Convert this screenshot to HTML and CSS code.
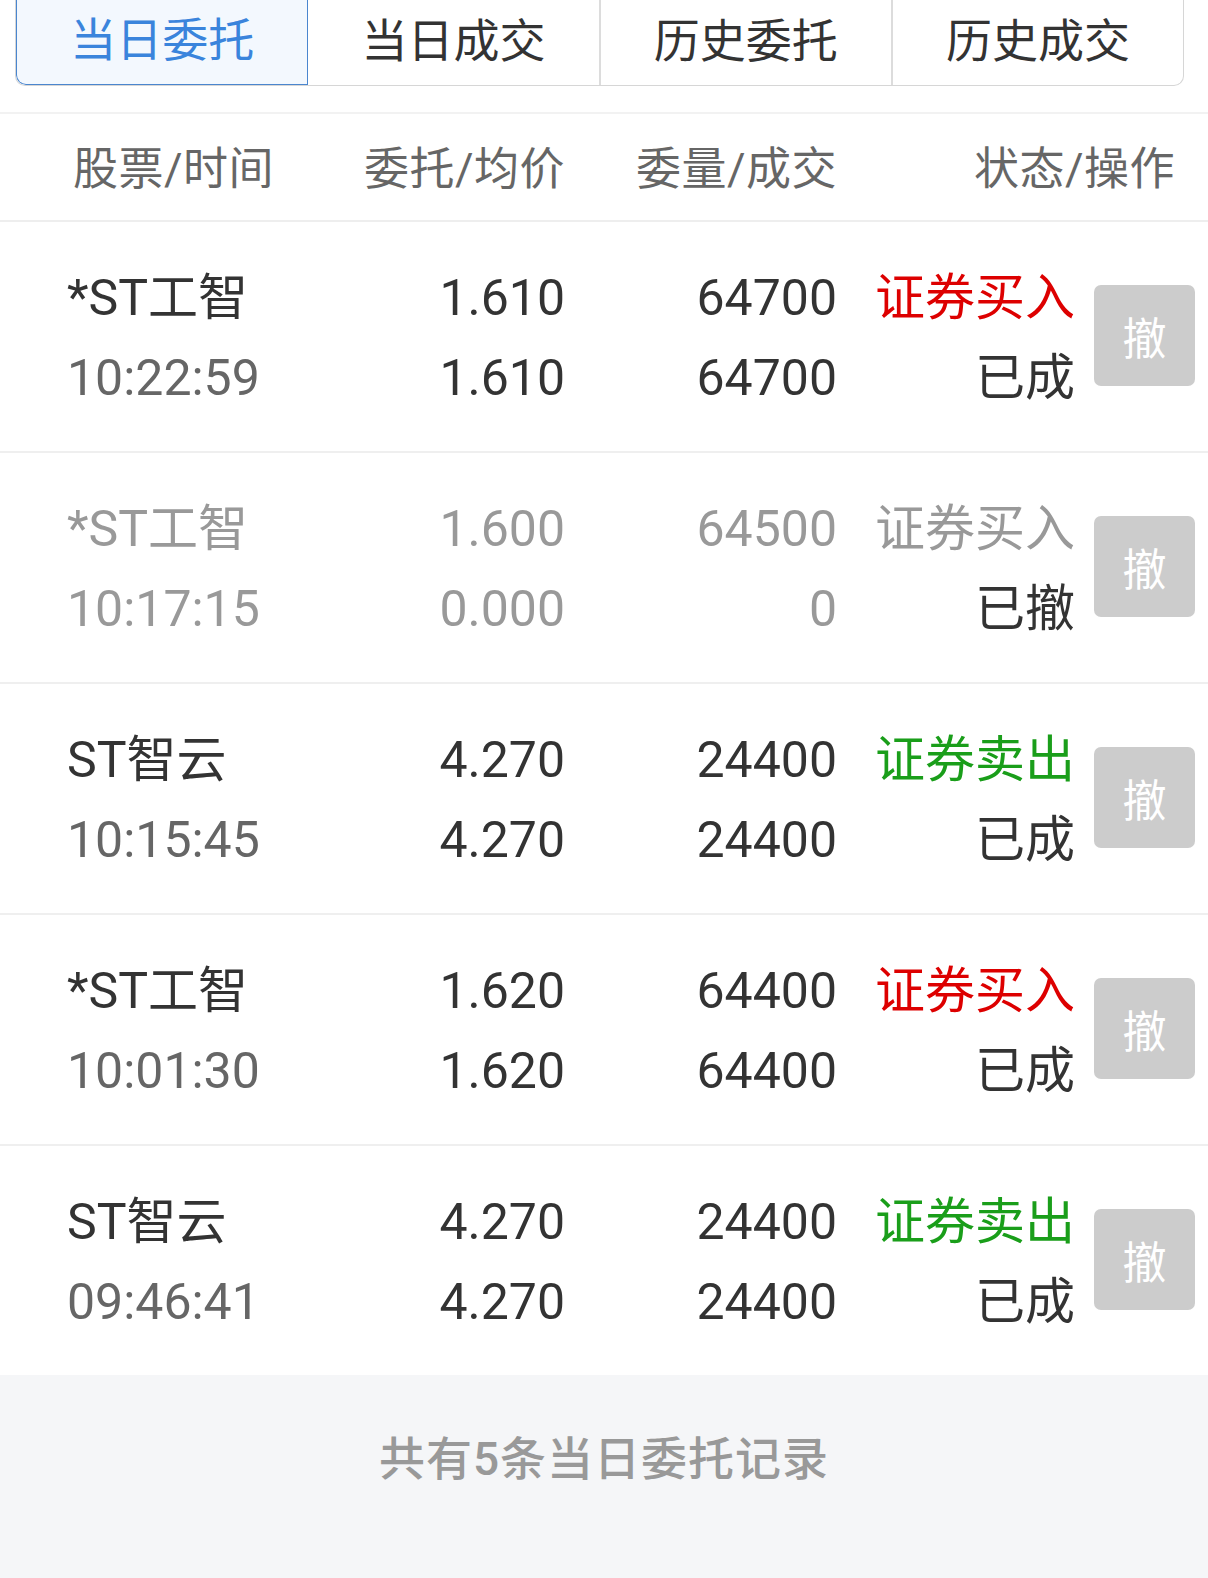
FILE: index.html
```html
<!DOCTYPE html>
<html lang="zh-CN">
<head>
    <meta charset="UTF-8">
    <meta name="viewport" content="width=device-width, initial-scale=1.0">
    <title>当日委托</title>
    <link rel="stylesheet" href="styles.css">
</head>
<body>
    <div class="tabs">
        <div class="tab active">当日委托</div>
        <div class="tab">当日成交</div>
        <div class="tab">历史委托</div>
        <div class="tab">历史成交</div>
    </div>

    <div class="head">
        <div class="first">股票/时间</div>
        <div>委托/均价</div>
        <div>委量/成交</div>
        <div class="last">状态/操作</div>
    </div>

    <div class="list">
        <div class="row">
            <div class="cell first"><span>*ST工智</span><span class="time">10:22:59</span></div>
            <div class="cell"><span>1.610</span><span>1.610</span></div>
            <div class="cell"><span>64700</span><span>64700</span></div>
            <div class="cell"><span class="buy">证券买入</span><span>已成</span></div>
            <div class="btn">撤</div>
        </div>
        <div class="row done">
            <div class="cell first"><span>*ST工智</span><span class="time">10:17:15</span></div>
            <div class="cell"><span>1.600</span><span>0.000</span></div>
            <div class="cell"><span>64500</span><span>0</span></div>
            <div class="cell"><span>证券买入</span><span class="state">已撤</span></div>
            <div class="btn">撤</div>
        </div>
        <div class="row">
            <div class="cell first"><span>ST智云</span><span class="time">10:15:45</span></div>
            <div class="cell"><span>4.270</span><span>4.270</span></div>
            <div class="cell"><span>24400</span><span>24400</span></div>
            <div class="cell"><span class="sell">证券卖出</span><span>已成</span></div>
            <div class="btn">撤</div>
        </div>
        <div class="row">
            <div class="cell first"><span>*ST工智</span><span class="time">10:01:30</span></div>
            <div class="cell"><span>1.620</span><span>1.620</span></div>
            <div class="cell"><span>64400</span><span>64400</span></div>
            <div class="cell"><span class="buy">证券买入</span><span>已成</span></div>
            <div class="btn">撤</div>
        </div>
        <div class="row">
            <div class="cell first"><span>ST智云</span><span class="time">09:46:41</span></div>
            <div class="cell"><span>4.270</span><span>4.270</span></div>
            <div class="cell"><span>24400</span><span>24400</span></div>
            <div class="cell"><span class="sell">证券卖出</span><span>已成</span></div>
            <div class="btn">撤</div>
        </div>
    </div>

    <div class="footer">共有5条当日委托记录</div>
</body>
</html>
```

FILE: styles.css
```css
body {
    margin: 0;
    font-family: Roboto, "Noto Sans CJK SC", sans-serif;
    color: #333;
    background-color: #fff;
}
.tabs {
    display: flex;
    margin: 0 24px 0 15px;
    height: 85px;
    border: 1px solid #d6d6d6;
    border-top: none;
    border-radius: 0 0 10px 10px;
    background-color: #fff;
    overflow: hidden;
}
.tab {
    flex: 1;
    display: flex;
    align-items: center;
    justify-content: center;
    padding-bottom: 12px;
    font-size: 46px;
    color: #333;
    border-left: 2px solid #dcdcdc;
}
.tab:first-child {
    border-left: none;
}
.tab.active {
    color: #3a84dc;
    background-color: #f3f8fe;
    border: 1px solid #4a86cf;
    border-top: none;
    border-radius: 0 0 0 10px;
}
.tab.active + .tab {
    border-left: none;
}
.head {
    margin-top: 26px;
    display: grid;
    grid-template-columns: 272px 226px 272px 338px;
    padding-left: 67px;
    padding-bottom: 4px;
    height: 102px;
    align-items: center;
    font-size: 45px;
    letter-spacing: 0.5px;
    color: #666;
    text-align: right;
    background-color: #fff;
    border-top: 2px solid #f2f2f2;
    border-bottom: 2px solid #eeeeee;
}
.head .first {
    text-align: left;
    padding-left: 6px;
}
.list {
    background-color: #fff;
}
.row {
    display: grid;
    grid-template-columns: 263px 235px 272px 238px 101px;
    padding-left: 67px;
    height: 229px;
    border-bottom: 2px solid #efefef;
    font-size: 50px;
    color: #333;
}
.row:last-child {
    border-bottom: none;
}
.cell {
    display: flex;
    flex-direction: column;
    align-items: flex-end;
    padding-top: 36px;
    line-height: 80px;
}
.cell.first {
    align-items: flex-start;
}
.time {
    color: #666;
}
.buy {
    color: #dd0000;
}
.sell {
    color: #1a9e1a;
}
.row.done .cell,
.row.done .time {
    color: #999;
}
.row.done .state {
    color: #333;
}
.btn {
    align-self: center;
    margin-left: 19px;
    width: 101px;
    height: 101px;
    border-radius: 7px;
    background-color: #cccccc;
    color: #fff;
    font-size: 44px;
    display: flex;
    align-items: center;
    justify-content: center;
    margin-top: -2px;
}
.footer {
    height: 203px;
    padding-top: 52px;
    box-sizing: border-box;
    text-align: center;
    font-size: 46px;
    font-weight: 500;
    letter-spacing: 1px;
    color: #999;
    line-height: 64px;
    background-color: #f5f6f8;
}
```
